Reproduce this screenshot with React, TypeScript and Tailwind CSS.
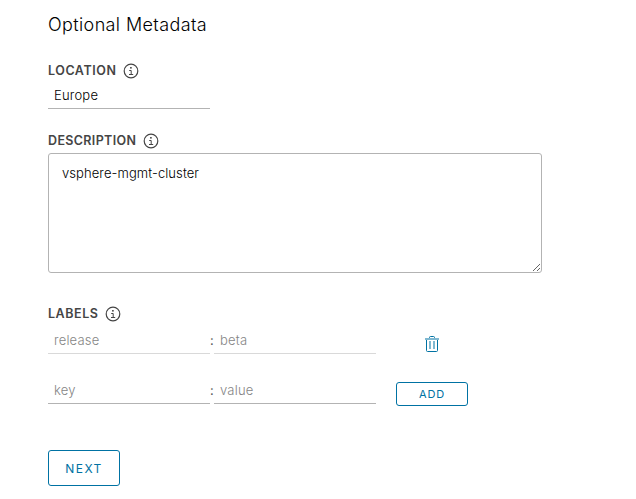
import React from 'react';

function InfoIcon() {
  return (
    <svg className="h-4 w-4 shrink-0" viewBox="0 0 16 16" fill="none" stroke="#454545">
      <circle cx="8" cy="8" r="6.8" strokeWidth="1.2" />
      <rect x="7.1" y="4" width="1.6" height="1.6" fill="#454545" stroke="none" />
      <path d="M6.2 7.5h2v4M6 11.5h4.2" strokeWidth="1" />
    </svg>
  );
}

function TrashIcon() {
  return (
    <svg className="h-4 w-[14px]" viewBox="0 0 14 16" fill="none">
      <path d="M4.5 2V1.5a1 1 0 0 1 1-1h3a1 1 0 0 1 1 1V2" stroke="#0072a3" />
      <path d="M1.5 4v10.5a1 1 0 0 0 1 1h9a1 1 0 0 0 1-1V4" stroke="#0072a3" />
      <path d="M0 3h14" stroke="#7fb8d1" strokeWidth="2" />
      <path d="M5 5v8M9 5v8" stroke="#7fb8d1" strokeWidth="2" />
    </svg>
  );
}

function FieldLabel({ text, className }: { text: string; className: string }) {
  return (
    <div className="flex h-4 items-center text-[12.5px] font-semibold text-[#454545]">
      <span className={className}>{text}</span>
      <InfoIcon />
    </div>
  );
}

const field =
  'h-6 w-[162px] border-b bg-transparent px-[6px] pb-[3px] text-[13px] font-light tracking-[0.2px] outline-none placeholder:text-[#858585]';

export default function App() {
  return (
    <main className="h-[499px] w-full overflow-hidden bg-white pl-12 pt-[13px] font-['Inter','Liberation_Sans',sans-serif] text-black">
      <h1 className="h-6 text-[18px] leading-6 font-light tracking-[0.38px]">Optional Metadata</h1>

      <section className="mt-[26px]">
        <FieldLabel text="LOCATION" className="w-[75px] tracking-[0.55px]" />
        <input className={`${field} mt-[6px] block border-[#b3b3b3]`} defaultValue="Europe" />
      </section>

      <section className="mt-6">
        <FieldLabel text="DESCRIPTION" className="w-[95px] tracking-[0.35px]" />
        <textarea
          className="mt-1 block h-[120px] w-[494px] resize rounded-[3px] border border-[#b3b3b3] px-[13px] py-[10px] text-[13px] leading-[19px] font-light tracking-[0.08px] outline-none"
          defaultValue="vsphere-mgmt-cluster"
        />
      </section>

      <section className="mt-[33px]">
        <FieldLabel text="LABELS" className="w-[57px] tracking-[0.55px]" />
        <div className="mt-2 flex h-6">
          <input className={`${field} border-[#d9d9d9]`} placeholder="release" disabled />
          <span className="w-1 text-[13px] leading-[20px] text-[#565656]">:</span>
          <input className={`${field} border-[#d9d9d9]`} placeholder="beta" disabled />
          <button className="ml-[49px] mt-[6px] h-4" aria-label="Delete label"><TrashIcon /></button>
        </div>
        <div className="mt-[26px] flex h-6">
          <input className={`${field} border-[#b3b3b3]`} placeholder="key" />
          <span className="w-1 text-[13px] leading-[20px] text-[#565656]">:</span>
          <input className={`${field} border-[#b3b3b3]`} placeholder="value" />
          <button className="ml-5 mt-[2px] h-6 w-[72px] rounded-[3px] border border-[#0072a3] text-[11px] leading-[22px] tracking-[0.9px] text-[#0072a3]">ADD</button>
        </div>
      </section>

      <button className="mt-[46px] block h-9 w-[72px] rounded-[3px] border border-[#0072a3] pt-px text-[12px] tracking-[1.5px] text-[#0072a3]">NEXT</button>
    </main>
  );
}
